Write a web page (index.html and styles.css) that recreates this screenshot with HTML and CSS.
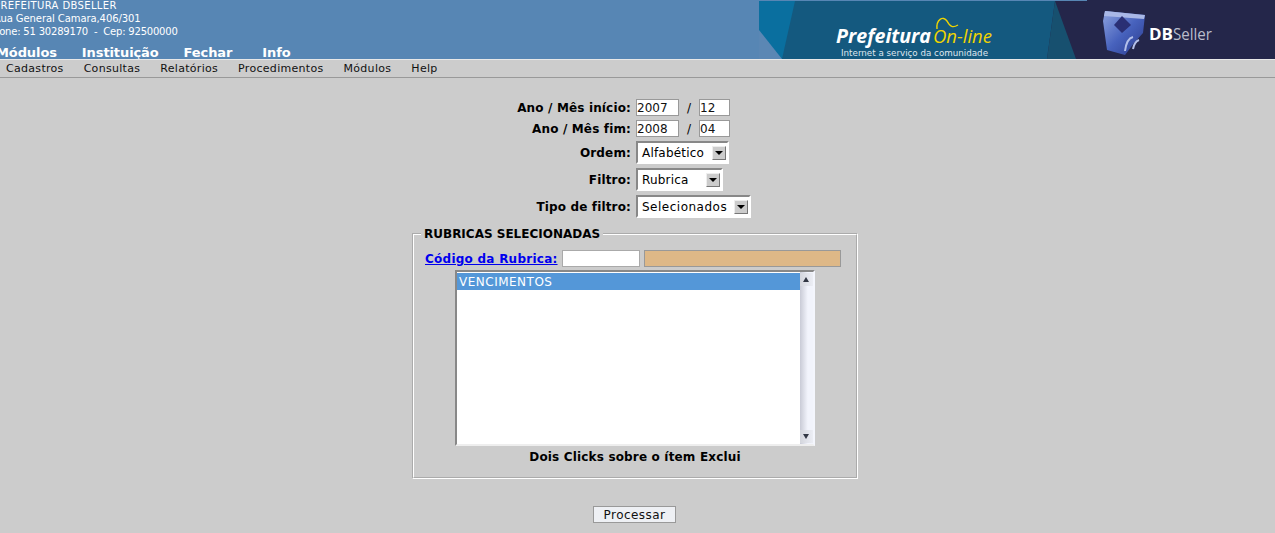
FILE: index.html
```html
<!DOCTYPE html>
<html lang="pt-BR">
<head>
    <meta charset="UTF-8">
    <meta name="viewport" content="width=device-width, initial-scale=1.0">
    <title>Prefeitura On-line</title>
    <link rel="stylesheet" href="styles.css">
</head>
<body>
    <header class="topo">
        <div class="topo-info">
            <div class="dados">
                <div class="d-nome">PREFEITURA DBSELLER</div>
                <div class="d-rua">Rua General Camara,406/301</div>
                <div class="d-fone">Fone: 51 30289170 &nbsp;-&nbsp; Cep: 92500000</div>
            </div>
            <nav class="menu-topo">
                <a>Módulos</a>
                <a>Instituição</a>
                <a>Fechar</a>
                <a>Info</a>
            </nav>
        </div>
        <svg class="banner" width="516" height="59" viewBox="0 -1 516 59">
            <defs>
                <linearGradient id="cubo" x1="0" y1="0" x2="1" y2="1">
                    <stop offset="0" stop-color="#8ea3de"/>
                    <stop offset="0.5" stop-color="#4762bd"/>
                    <stop offset="1" stop-color="#2a3a8c"/>
                </linearGradient>
            </defs>
            <rect width="516" height="58" fill="#24264a"/>
            <rect x="328" y="-1" width="188" height="1" fill="#24264a"/>
            <polygon points="0,0 296,0 288,58 0,58" fill="#14597f"/>
            <polygon points="296,0 317,58 288,58" fill="#17506f"/>
            <polygon points="0,0 36,0 23,58 0,58" fill="#0a6f9f"/>
            <polygon points="0,29 23,58 0,58" fill="#5b87b4"/>
            <text class="b-pref" x="77" y="42" textLength="95" lengthAdjust="spacingAndGlyphs">Prefeitura</text>
            <text class="b-online" x="174" y="42" textLength="59" lengthAdjust="spacingAndGlyphs">On-line</text>
            <path d="M178 28C177 19 184 14 188 20C191 26 194 27 199 24" fill="none" stroke="#f0d400" stroke-width="1.4"/>
            <text class="b-sub" x="82" y="55" textLength="147" lengthAdjust="spacingAndGlyphs">Internet a serviço da comunidade</text>
            <polygon points="346,10 386,14 384,32 375,42 366,54 348,49 344,20" fill="url(#cubo)"/>
            <polygon points="346,10 386,14 385,18 345,15" fill="#a9b8e6"/>
            <polygon points="363,15 372,24 363,32 355,24" fill="#2a2f74"/>
            <path d="M366 50c1-8 4-13 8-14M374 48c1-5 3-8 6-9" fill="none" stroke="#b4c0ea" stroke-width="2"/>
            <text class="b-db" x="390" y="39" textLength="24" lengthAdjust="spacingAndGlyphs">DB</text>
            <text class="b-seller" x="414" y="39" textLength="39" lengthAdjust="spacingAndGlyphs">Seller</text>
        </svg>
    </header>

    <nav class="menu">
        <a>Cadastros</a>
        <a>Consultas</a>
        <a>Relatórios</a>
        <a>Procedimentos</a>
        <a>Módulos</a>
        <a>Help</a>
    </nav>

    <form class="form">
        <div class="linha l-texto">
            <label>Ano / Mês início:</label>
            <input class="ano" type="text" value="2007">
            <span class="barra">/</span>
            <input class="mes" type="text" value="12">
        </div>
        <div class="linha l-texto">
            <label>Ano / Mês fim:</label>
            <input class="ano" type="text" value="2008">
            <span class="barra">/</span>
            <input class="mes" type="text" value="04">
        </div>
        <div class="linha l-select">
            <label>Ordem:</label>
            <div class="select s-ordem">Alfabético<span class="seta"></span></div>
        </div>
        <div class="linha l-select">
            <label>Filtro:</label>
            <div class="select s-filtro">Rubrica<span class="seta"></span></div>
        </div>
        <div class="linha l-select">
            <label>Tipo de filtro:</label>
            <div class="select s-tipo">Selecionados<span class="seta"></span></div>
        </div>

        <fieldset class="rubricas">
            <legend>RUBRICAS SELECIONADAS</legend>
            <div class="codigo">
                <a href="#">Código da Rubrica:</a>
                <input class="cod" type="text">
                <input class="desc" type="text" readonly>
            </div>
            <div class="lista">
                <div class="itens"><div class="item">VENCIMENTOS</div></div>
                <div class="scroll">
                    <span class="bot"><i class="up"></i></span>
                    <span class="bot"><i class="down"></i></span>
                </div>
            </div>
            <div class="dica">Dois Clicks sobre o ítem Exclui</div>
        </fieldset>

        <button class="processar" type="button">Processar</button>
    </form>
</body>
</html>
```

FILE: styles.css
```css
body {
    font-family: "DejaVu Sans", sans-serif;
    margin: 0;
    padding: 0;
    height: 533px;
    overflow: hidden;
    background-color: #cccccc;
    color: #000;
}

/* topo */
.topo {
    display: flex;
    justify-content: space-between;
    height: 59px;
    background-color: #5786b4;
    color: #fff;
    overflow: hidden;
}

.topo-info {
    margin-left: -4px;
}

.dados {
    font-size: 10px;
    line-height: 13px;
    height: 47px;
    margin: -1px 0 0 -2px;
}

.d-nome {
    letter-spacing: 0.37px;
}

.d-rua {
    letter-spacing: -0.08px;
}

.d-fone {
    letter-spacing: -0.2px;
}

.menu-topo {
    display: flex;
    gap: 25px;
    font-size: 13px;
    font-weight: bold;
    line-height: 14px;
    letter-spacing: -0.1px;
}

.menu-topo a:last-child {
    margin-left: 5px;
}

.banner {
    display: block;
}

.b-pref {
    font: italic bold 19px "Open Sans", sans-serif;
    fill: #fff;
}

.b-online {
    font: italic 19px "Open Sans", sans-serif;
    fill: #f0d400;
}

.b-sub {
    font: 9px "DejaVu Sans", sans-serif;
    fill: #dfe6ee;
}

.b-db {
    font: bold 16px "Open Sans", sans-serif;
    fill: #fff;
}

.b-seller {
    font: 16px "Open Sans", sans-serif;
    fill: #b9bccb;
}

/* menu */
.menu {
    display: flex;
    gap: 20px;
    height: 17px;
    padding-left: 6px;
    border-top: 1px solid #e8e8e8;
    border-bottom: 1px solid #999;
    font-size: 11px;
    line-height: 17px;
    color: #111;
    letter-spacing: 0.3px;
}

/* formulario */
.form {
    display: flex;
    flex-direction: column;
    width: 446px;
    margin: 19px 0 0 412px;
}

.linha {
    display: flex;
    align-items: center;
    font-size: 12px;
}

.linha label {
    width: 219px;
    margin-right: 5px;
    text-align: right;
    font-weight: bold;
    letter-spacing: 0.15px;
}

.l-texto {
    height: 21px;
}

.l-select {
    height: 27px;
}

input {
    box-sizing: border-box;
    height: 17px;
    padding: 0;
    border: 1px solid #999;
    background-color: #fff;
    font-family: "DejaVu Sans", sans-serif;
    font-size: 12px;
    color: #111;
}

.ano {
    width: 43px;
}

.mes {
    width: 31px;
}

.barra {
    width: 20px;
    text-align: center;
}

.select {
    position: relative;
    box-sizing: border-box;
    height: 23px;
    padding-left: 4px;
    border: 2px solid;
    border-color: #888 #fff #fff #888;
    background-color: #fff;
    font-size: 12px;
    line-height: 21px;
    letter-spacing: 0.2px;
}

.s-ordem {
    width: 93px;
}

.s-filtro {
    width: 87px;
}

.s-tipo {
    width: 115px;
    letter-spacing: 0.5px;
}

.seta {
    position: absolute;
    top: 3px;
    right: 1px;
    width: 14px;
    height: 14px;
    box-sizing: border-box;
    border: 1px solid;
    border-color: #eee #777 #777 #eee;
    background-color: #ccc;
}

.seta::after {
    content: "";
    position: absolute;
    top: 4px;
    left: 2px;
    border-style: solid;
    border-width: 4px 4px 0;
    border-color: #000 transparent transparent;
}

.rubricas {
    box-sizing: border-box;
    width: 446px;
    height: 252px;
    margin: 7px 0 0;
    padding: 0;
    border: 2px groove #fff;
}

.rubricas legend {
    padding: 0 3px;
    margin-left: 7px;
    font-size: 12px;
    font-weight: bold;
    line-height: 14px;
}

.codigo {
    display: flex;
    align-items: center;
    height: 20px;
    margin-top: 7px;
    padding-left: 11px;
    font-size: 12px;
    font-weight: bold;
    letter-spacing: 0.25px;
}

.codigo a {
    color: #0000ee;
    margin-top: 2px;
    margin-right: 4px;
}

.cod {
    width: 78px;
    border-color: #aaa;
    margin-right: 4px;
}

.desc {
    width: 197px;
    background-color: #deb887;
    border-color: #999;
}

.lista {
    display: flex;
    box-sizing: border-box;
    width: 360px;
    height: 176px;
    margin: 2px 0 0 41px;
    border-top: 2px solid #888;
    border-left: 2px solid #888;
    border-right: 2px solid #f4f6fd;
    border-bottom: 2px solid #eee;
    background-color: #fff;
}

.itens {
    flex: 1;
    padding-top: 1px;
}

.item {
    height: 17px;
    padding-left: 2px;
    background-color: #5497d8;
    color: #fff;
    font-size: 12px;
    line-height: 19px;
    letter-spacing: 0.5px;
}

.scroll {
    display: flex;
    flex-direction: column;
    justify-content: space-between;
    width: 13px;
    padding: 1px 0;
    background: linear-gradient(to right, #c9cbd6, #f2f4fc 60%);
}

.bot {
    position: relative;
    height: 13px;
    background: linear-gradient(to right, #d4d6dd, #eceef5);
}

.bot i {
    position: absolute;
    left: 3px;
    top: 4px;
    border-style: solid;
    border-color: transparent;
}

.up {
    border-width: 0 3.5px 5px;
    border-bottom-color: #333845 !important;
}

.down {
    border-width: 5px 3.5px 0;
    border-top-color: #333845 !important;
}

.dica {
    margin-top: 4px;
    text-align: center;
    font-size: 12px;
    font-weight: bold;
    letter-spacing: 0.17px;
}

.processar {
    align-self: flex-start;
    box-sizing: border-box;
    width: 83px;
    height: 17px;
    margin: 27px 0 0 181px;
    padding: 1px 0 0;
    border: 1px solid #999;
    background-color: #eef0f4;
    font-family: "DejaVu Sans", sans-serif;
    font-size: 12px;
    line-height: 15px;
    letter-spacing: 0.45px;
    color: #111;
}
```
